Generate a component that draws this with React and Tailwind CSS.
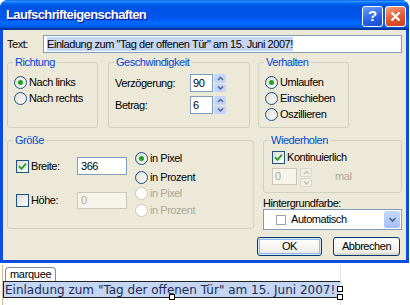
import React from 'react';

const Radio = ({ checked, disabled }) => (
    <span className={`w-[13px] h-[13px] rounded-full border shrink-0 flex items-center justify-center ${disabled ? 'border-[#cac8bb] bg-white' : 'border-[#1c5180] bg-[linear-gradient(135deg,#dcdcd7,#ffffff)]'}`}>
        {checked && <span className="w-[5px] h-[5px] rounded-full bg-[#21a121]" />}
    </span>
);

const Check = ({ checked }) => (
    <span className="w-[13px] h-[13px] border border-[#1c5180] bg-[linear-gradient(135deg,#dcdcd7,#ffffff)] shrink-0 flex items-center justify-center">
        {checked && (
            <svg width="9" height="9" viewBox="0 0 9 9">
                <path d="M1 4.2 L3.4 6.8 L8 1.6" stroke="#21a121" strokeWidth="1.8" fill="none" />
            </svg>
        )}
    </span>
);

const Spinner = ({ disabled }) => (
    <div className="w-[12px] h-[18px] flex flex-col gap-[1px] shrink-0">
        {['M2 5 L4.5 2.5 L7 5', 'M2 2.5 L4.5 5 L7 2.5'].map((d, i) => (
            <div key={i} className={`flex-1 rounded-[2px] flex items-center justify-center ${disabled ? 'bg-[#f0efe6] border border-[#d8d6c8]' : 'bg-[#c3d5fc]'}`}>
                <svg width="9" height="7" viewBox="0 0 9 7">
                    <path d={d} stroke={disabled ? '#c5c2b2' : '#4d6185'} strokeWidth="1.4" fill="none" />
                </svg>
            </div>
        ))}
    </div>
);

const Group = ({ title, className, children }) => (
    <div className={`border border-[#d0d0bf] rounded-[3px] shrink-0 ${className}`}>
        <div className="-mt-[7px] ml-[5px] px-[2px] w-fit bg-[#ece9d8] text-[#0046d5] leading-[13px]">{title}</div>
        {children}
    </div>
);

const RadioRow = ({ label, checked, disabled, className = '' }) => (
    <div className={`h-[16px] flex items-center gap-[2px] ${className}`}>
        <Radio checked={checked} disabled={disabled} />
        <span className={disabled ? 'text-[#aca899]' : ''}>{label}</span>
    </div>
);

const App = () => {
    return (
        <div className="w-[410px] h-[305px] bg-white relative overflow-hidden font-['Liberation_Sans',Arial,sans-serif]">
            <div className="w-[409px] h-[263px] rounded-t-[8px] overflow-hidden flex flex-col bg-[#0a4de0]">
                {/* title bar */}
                <div className="h-[30px] shrink-0 flex items-center pl-[6px] pr-[3px] bg-[linear-gradient(180deg,#0058ee_0%,#3593ff_4%,#288eff_6%,#127dff_8%,#036ffc_10%,#0262ee_14%,#0057e5_20%,#0054e3_24%,#0055eb_56%,#005bf5_66%,#026afe_76%,#0062ef_86%,#0052d6_92%,#0040ab_94%,#003092_100%)]">
                    <span className="flex-1 text-white font-bold text-[13px] tracking-[-0.6px] [text-shadow:1px_1px_#0f1089]">Laufschrifteigenschaften</span>
                    <div className="flex gap-[2px] mt-[3px]">
                        <div className="w-[21px] h-[21px] rounded-[3px] border border-white bg-[linear-gradient(160deg,#6d9ff8,#2360e6_60%,#1a4fd0)] flex items-center justify-center text-white font-bold text-[15px]">?</div>
                        <div className="w-[21px] h-[21px] rounded-[3px] border border-white bg-[linear-gradient(160deg,#f0a07f,#e2582f_55%,#c9401e)] flex items-center justify-center">
                            <svg width="11" height="11" viewBox="0 0 11 11">
                                <path d="M1.5 1.5 L9.5 9.5 M9.5 1.5 L1.5 9.5" stroke="white" strokeWidth="2.2" />
                            </svg>
                        </div>
                    </div>
                </div>

                {/* body */}
                <div className="flex-1 mx-[3px] mb-[3px] bg-[#ece9d8] flex flex-col text-[11px] tracking-[-0.45px] text-black">
                    <div className="mt-[5px] h-[18px] flex items-center pl-[4px] pr-[4px]">
                        <span className="w-[36px] shrink-0">Text:</span>
                        <div className="flex-1 h-[18px] border border-[#7f9db9] bg-white flex items-center px-[3px]">
                            <span className="bg-[#c5d5f2] leading-[14px]">Einladung zum "Tag der offenen Tür" am 15. Juni 2007!</span>
                        </div>
                    </div>

                    <div className="mt-[9px] flex pl-[4px]">
                        <Group title="Richtung" className="w-[91px] h-[66px]">
                            <div className="mt-[5px] pl-[6px]">
                                <RadioRow label="Nach links" checked />
                                <RadioRow label="Nach rechts" />
                            </div>
                        </Group>
                        <Group title="Geschwindigkeit" className="ml-[10px] w-[142px] h-[66px]">
                            <div className="mt-[5px] pl-[6px] flex flex-col gap-[4px]">
                                {[['Verzögerung:', '90'], ['Betrag:', '6']].map(([l, v]) => (
                                    <div key={l} className="h-[18px] flex items-center">
                                        <span className="w-[75px]">{l}</span>
                                        <div className="w-[23px] h-[18px] border border-[#7f9db9] bg-white flex items-center px-[2px]">{v}</div>
                                        <div className="ml-[1px]"><Spinner /></div>
                                    </div>
                                ))}
                            </div>
                        </Group>
                        <Group title="Verhalten" className="ml-[8px] w-[91px] h-[66px]">
                            <div className="mt-[5px] pl-[6px]">
                                <RadioRow label="Umlaufen" checked />
                                <RadioRow label="Einschieben" />
                                <RadioRow label="Oszillieren" />
                            </div>
                        </Group>
                    </div>

                    <div className="mt-[12px] flex pl-[4px]">
                        <Group title="Größe" className="w-[247px] h-[89px]">
                            <div className="flex">
                                <div className="flex flex-col">
                                    <div className="mt-[10px] h-[18px] flex items-center">
                                        <div className="ml-[8px] w-[61px] flex items-center gap-[2px]">
                                            <Check checked />
                                            <span>Breite:</span>
                                        </div>
                                        <div className="w-[50px] h-[18px] border border-[#7f9db9] bg-white flex items-center px-[3px]">366</div>
                                    </div>
                                    <div className="mt-[17px] h-[17px] flex items-center">
                                        <div className="ml-[8px] w-[61px] flex items-center gap-[2px]">
                                            <Check />
                                            <span>Höhe:</span>
                                        </div>
                                        <div className="w-[50px] h-[17px] border border-[#c9c7ba] bg-[#f5f4ea] text-[#aca899] flex items-center px-[3px]">0</div>
                                    </div>
                                </div>
                                <div className="ml-[8px] flex flex-col">
                                    <RadioRow label="in Pixel" checked className="mt-[3px]" />
                                    <RadioRow label="in Prozent" className="mt-[3px]" />
                                    <RadioRow label="in Pixel" disabled />
                                    <RadioRow label="in Prozent" disabled className="mt-[1px]" />
                                </div>
                            </div>
                        </Group>

                        <div className="ml-[9px] w-[139px] flex flex-col">
                            <Group title="Wiederholen" className="h-[53px]">
                                <div className="mt-[2px] pl-[8px] h-[16px] flex items-center gap-[2px]">
                                    <Check checked />
                                    <span>Kontinuierlich</span>
                                </div>
                                <div className="mt-[3px] pl-[8px] h-[17px] flex items-center">
                                    <div className="w-[25px] h-[17px] border border-[#c9c7ba] bg-[#f5f4ea] text-[#aca899] flex items-center px-[2px]">0</div>
                                    <div className="ml-[3px]"><Spinner disabled /></div>
                                    <span className="ml-[23px] text-[#aca899]">mal</span>
                                </div>
                            </Group>
                            <div className="mt-[4px] leading-[12px]">Hintergrundfarbe:</div>
                            <div className="h-[21px] border border-[#7f9db9] bg-white flex items-center pl-[12px] pr-[1px]">
                                <span className="w-[10px] h-[10px] border border-[#a0a0a0] bg-white" />
                                <span className="ml-[5px] flex-1">Automatisch</span>
                                <div className="w-[16px] h-[17px] rounded-[2px] bg-[linear-gradient(180deg,#c6d8fc,#a5c0f6)] flex items-center justify-center">
                                    <svg width="9" height="7" viewBox="0 0 9 7">
                                        <path d="M1.5 2 L4.5 5 L7.5 2" stroke="#4d6185" strokeWidth="1.6" fill="none" />
                                    </svg>
                                </div>
                            </div>
                        </div>
                    </div>

                    <div className="mt-[7px] flex justify-end pr-[6px] gap-[11px]">
                        <button className="w-[65px] h-[19px] rounded-[3px] border border-[#003c74] bg-[linear-gradient(180deg,#ffffff,#f0f0ea_80%,#d6d0c5)] shadow-[inset_0_0_0_1px_#cee7ff,inset_0_0_0_2px_#98b8ea] text-[11px]">OK</button>
                        <button className="w-[67px] h-[19px] rounded-[3px] border border-[#003c74] bg-[linear-gradient(180deg,#ffffff,#f0f0ea_80%,#d6d0c5)] text-[11px]">Abbrechen</button>
                    </div>
                </div>
            </div>

            {/* editor preview */}
            <div className="relative h-[42px]">
                <div className="absolute left-[2px] top-[2px] bottom-0 w-[1px] bg-[#d8b88c]" />
                <div className="absolute left-[340px] top-[2px] bottom-0 w-[1px] bg-[#e2e2e2]" />
                <div className="pt-[4px] pl-[5px]">
                    <div className="w-fit h-[14px] border border-[#7a8ca5] border-b-0 rounded-t-[4px] px-[4px] text-[11px] tracking-[-0.3px] leading-[13px] text-black">marquee</div>
                </div>
                <div className="ml-[3px] w-[338px] h-[17px] border border-[#222] bg-[#c5d6f2] flex items-center pl-[1px] overflow-hidden whitespace-nowrap font-['DejaVu_Sans',Verdana,sans-serif] text-[12px] text-[#1c2a55]">
                    Einladung zum "Tag der offenen Tür" am 15. Juni 2007!
                </div>
                <span className="absolute left-[337px] top-[23px] w-[6px] h-[6px] border border-black bg-white" />
                <span className="absolute left-[337px] top-[31px] w-[6px] h-[6px] border border-black bg-white" />
                <span className="absolute left-[169px] top-[31px] w-[6px] h-[6px] border border-black bg-white" />
            </div>
        </div>
    );
};

export default App;
